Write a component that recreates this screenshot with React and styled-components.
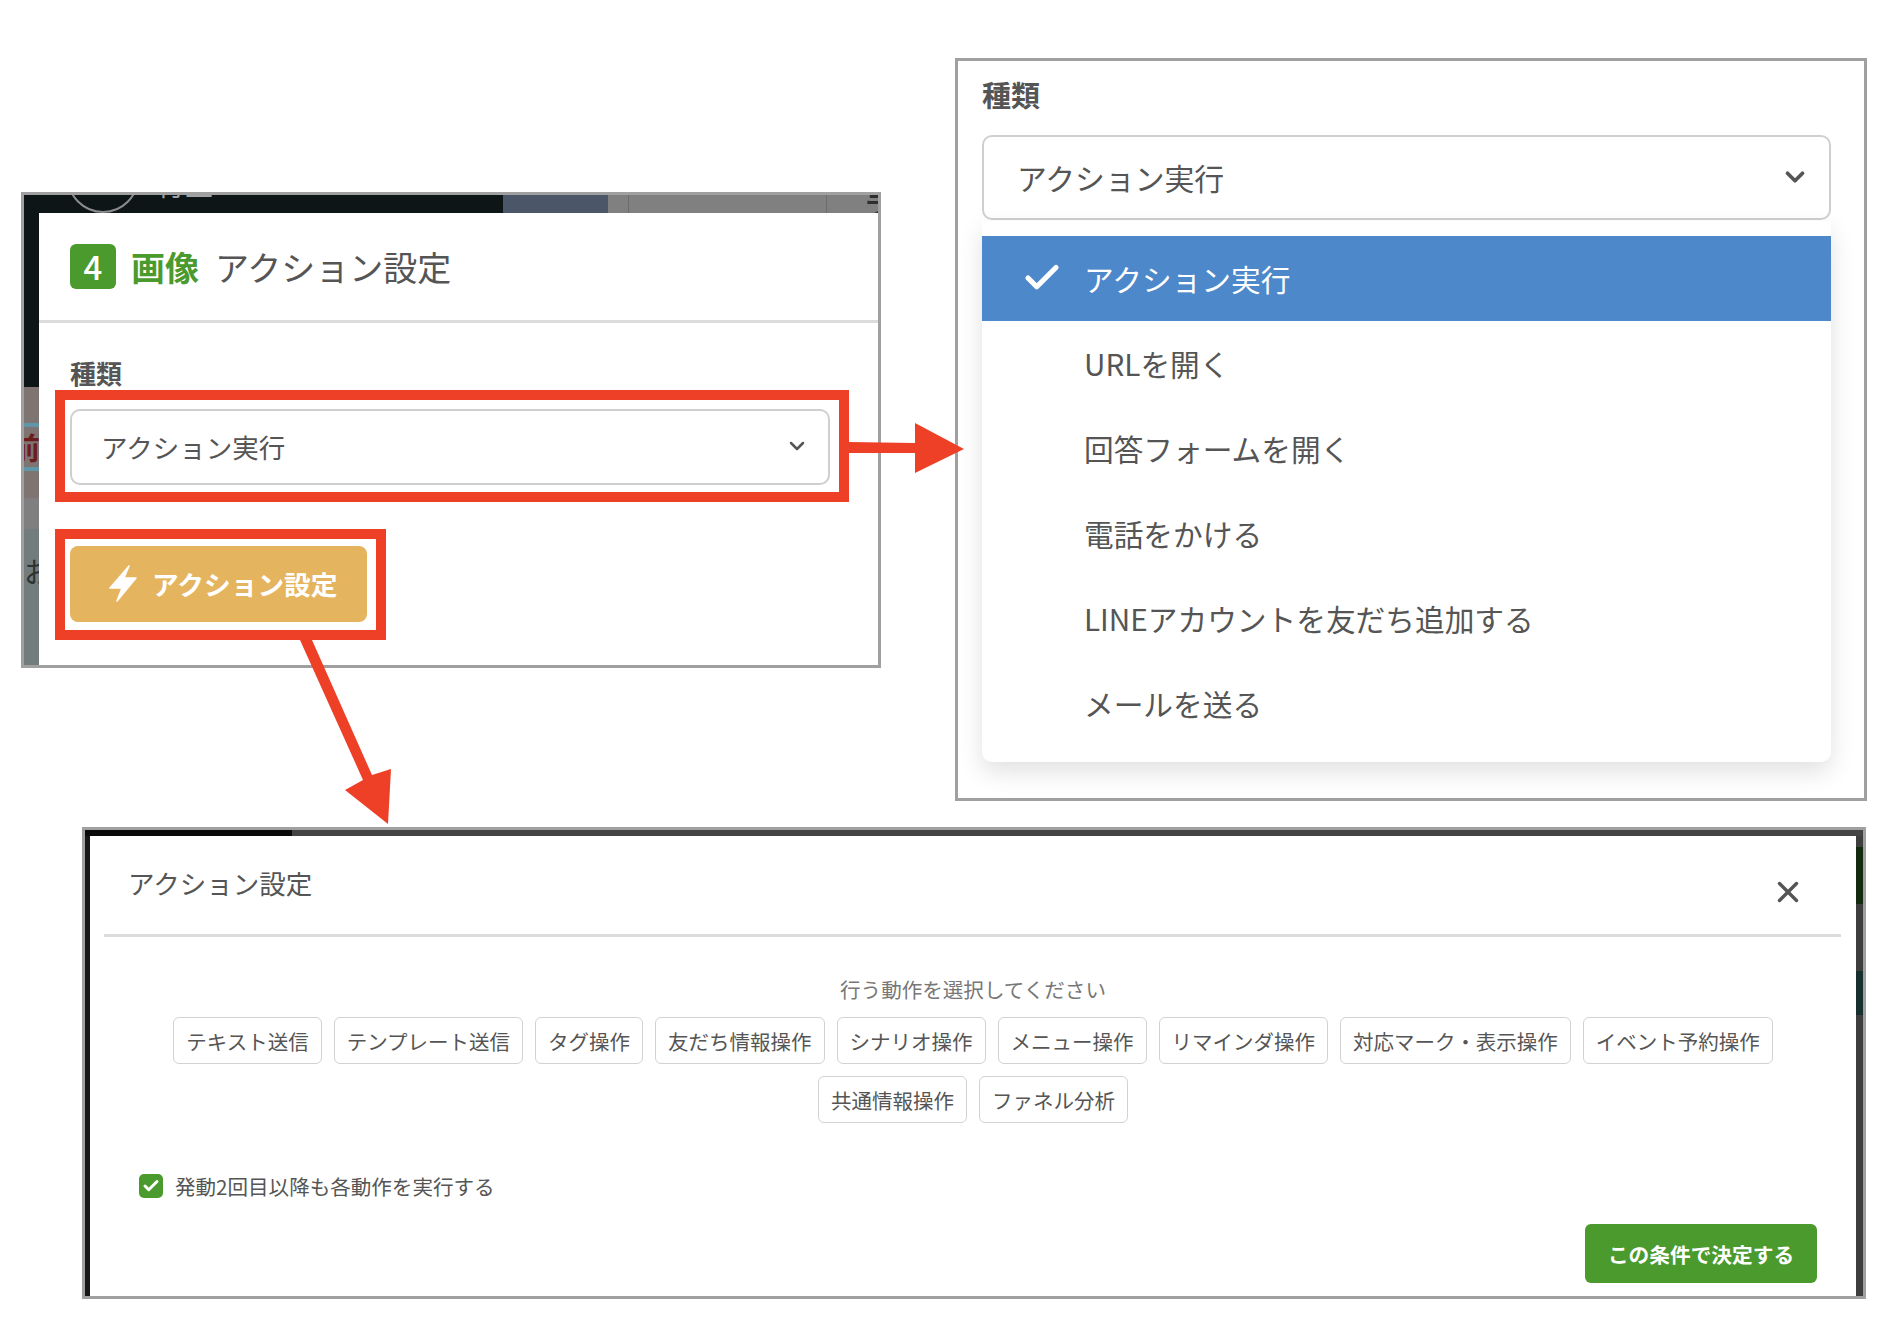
import React from "react";
import styled, { createGlobalStyle } from "styled-components";
import { ChevronDown, Check, X } from "lucide-react";

const RED = "#ee4026";
const GREEN = "#4a9a2e";
const TEXT = "#555";

const Global = createGlobalStyle`
  * { box-sizing: border-box; }
  html, body { margin: 0; padding: 0; background: #fff; }
  body { font-family: "Noto Sans CJK JP", "Noto Sans", sans-serif; color: ${TEXT}; }
`;

const Page = styled.div`
  position: relative;
  width: 1880px;
  height: 1320px;
  padding-top: 59px;
  overflow: hidden;
`;
const TopRow = styled.div`
  display: flex;
  align-items: flex-start;
  padding-left: 21px;
`;
const Arrows = styled.svg`
  position: absolute;
  inset: 0;
  pointer-events: none;
`;

/* shared screenshot frame */
const Shot = styled.section`
  border: 3px solid #a0a0a0;
  display: grid;
  overflow: hidden;
`;

/* left: modal with the two highlighted controls */
const ModalShot = styled(Shot)`
  width: 860px;
  height: 476px;
  margin-top: 133px;
  grid-template-columns: 15px 1fr;
  grid-template-rows: 18px 1fr;
  background: #fff;
`;
const TopStrip = styled.div`
  grid-column: 1 / -1;
  position: relative;
  display: flex;
  overflow: hidden;
`;
const StripPart = styled.div`
  flex: ${(p) => (p.$w ? `0 0 ${p.$w}px` : "1")};
  background: ${(p) => p.$c};
  border-left: ${(p) => (p.$line ? "1px solid #6c6c6c" : "none")};
`;
const Avatar = styled.div`
  position: absolute;
  left: 43px;
  top: -54px;
  width: 72px;
  height: 72px;
  border-radius: 50%;
  border: 2px solid #8c8c8c;
`;
const GhostName = styled.span`
  position: absolute;
  left: 133px;
  top: -28px;
  font-size: 28px;
  line-height: 34px;
  color: #a2a2a2;
`;
const GhostCorner = styled.span`
  position: absolute;
  right: -12px;
  top: -6px;
  font-size: 26px;
  line-height: 30px;
  font-weight: 700;
  color: #2e2e2e;
`;
const SideStrip = styled.div`
  display: flex;
  flex-direction: column;
  overflow: hidden;
`;
const SidePart = styled.div`
  position: relative;
  flex: ${(p) => (p.$h ? `0 0 ${p.$h}px` : "1")};
  background: ${(p) => p.$c};
  overflow: hidden;
`;
const TealBars = styled.div`
  position: absolute;
  left: 0;
  right: 0;
  top: 36px;
  height: 48px;
  border-top: 4px solid #5f97a8;
  border-bottom: 4px solid #5f97a8;
`;
const GhostRed = styled.span`
  position: absolute;
  right: -1px;
  top: 41px;
  font-size: 30px;
  line-height: 36px;
  font-weight: 700;
  color: #6d1c1c;
`;
const GhostDark = styled.span`
  position: absolute;
  left: 0;
  top: 24px;
  font-size: 28px;
  line-height: 36px;
  color: #2e3232;
`;
const ModalCard = styled.div`
  background: #fff;
  border-top-left-radius: 10px;
`;
const ModalHeader = styled.header`
  height: 107px;
  padding: 31px 0 0 31px;
  display: flex;
  align-items: flex-start;
`;
const Badge = styled.span`
  flex: 0 0 46px;
  height: 45px;
  border-radius: 6px;
  background: ${GREEN};
  color: #fff;
  font-size: 33px;
  font-weight: 500;
  line-height: 45px;
  text-align: center;
`;
const KindName = styled.span`
  margin-left: 15px;
  font-size: 34px;
  line-height: 45px;
  font-weight: 700;
  color: ${GREEN};
`;
const ModalTitle = styled.h2`
  margin: 0 0 0 16px;
  font-size: 34px;
  line-height: 45px;
  font-weight: 400;
  color: ${TEXT};
`;
const Rule = styled.hr`
  margin: 0;
  border: 0;
  height: 3px;
  background: #dcdcdc;
`;
const ModalBody = styled.div`
  padding: 33px 0 0 16px;
`;
const FieldLabel = styled.label`
  display: block;
  margin-left: 15px;
  font-size: 26px;
  line-height: 34px;
  font-weight: 700;
  color: ${TEXT};
`;
const Highlight = styled.div`
  width: ${(p) => p.$w}px;
  height: ${(p) => p.$h}px;
  margin-top: ${(p) => p.$mt}px;
  padding: ${(p) => p.$pad};
  border: 10px solid ${RED};
`;
const SelectBox = styled.div`
  height: ${(p) => p.$h}px;
  padding: 0 ${(p) => p.$pr}px 2px ${(p) => p.$pl}px;
  display: flex;
  align-items: center;
  justify-content: space-between;
  border: 2px solid #cfcfcf;
  border-radius: 10px;
  background: #fff;
  font-size: ${(p) => p.$size}px;
  color: ${TEXT};
`;
const ActionButton = styled.button`
  width: 297px;
  height: 76px;
  padding: 0 0 2px 39px;
  display: flex;
  align-items: center;
  gap: 15px;
  border: 0;
  border-radius: 8px;
  background: #e5b45f;
  color: #fff;
  font: 700 26.7px "Noto Sans CJK JP", sans-serif;
`;

/* right: open dropdown */
const DropdownShot = styled.section`
  width: 912px;
  height: 743px;
  margin: -1px 0 0 74px;
  padding: 12px 33px 0 24px;
  border: 3px solid #a0a0a0;
`;
const DropLabel = styled.label`
  display: block;
  height: 62px;
  font-size: 29px;
  line-height: 42px;
  font-weight: 700;
  color: ${TEXT};
`;
const Menu = styled.ul`
  list-style: none;
  margin: 1px 0 0;
  padding: 15px 0 16px;
  background: #fff;
  border-radius: 0 0 10px 10px;
  box-shadow: 0 10px 24px rgba(0, 0, 0, 0.12);
`;
const MenuItem = styled.li`
  height: 85px;
  padding-bottom: 1px;
  display: flex;
  align-items: center;
  background: ${(p) => (p.$active ? "#4d88ca" : "transparent")};
  color: ${(p) => (p.$active ? "#fff" : TEXT)};
  font-size: 29.7px;
`;
const CheckSlot = styled.span`
  flex: 0 0 102px;
  padding-left: 39px;
  display: flex;
  align-items: center;
`;

/* bottom: action settings modal */
const SettingsShot = styled(Shot)`
  width: 1784px;
  height: 472px;
  margin: 26px 0 0 82px;
  grid-template-columns: 5px 1fr 7px;
  grid-template-rows: 6px 1fr;
`;
const SettingsCard = styled.div`
  background: #fff;
  border-radius: 6px 6px 0 0;
  display: flex;
  flex-direction: column;
`;
const SettingsHeader = styled.header`
  height: 98px;
  padding: 19px 51px 0 38px;
  display: flex;
  justify-content: space-between;
  align-items: flex-start;
`;
const SettingsTitle = styled.h3`
  margin: 0;
  font-size: 26.5px;
  line-height: 56px;
  font-weight: 400;
  color: ${TEXT};
`;
const CloseButton = styled.button`
  margin-top: 20px;
  padding: 0;
  border: 0;
  background: none;
  color: #555;
  display: flex;
`;
const SettingsRule = styled(Rule)`
  margin: 0 15px 0 14px;
`;
const Hint = styled.p`
  margin: 38px 0 0;
  height: 42px;
  font-size: 20.55px;
  line-height: 28px;
  text-align: center;
  color: #777;
`;
const ChipWrap = styled.div`
  width: 1660px;
  margin: 0 auto;
  display: flex;
  flex-wrap: wrap;
  justify-content: center;
  gap: 12px;
`;
const Chip = styled.button`
  height: 47px;
  padding: 0 12px;
  border: 1px solid #d2d2d2;
  border-radius: 6px;
  background: #fff;
  color: ${TEXT};
  font: 400 20.5px "Noto Sans CJK JP", sans-serif;
`;
const RepeatRow = styled.label`
  margin: 51px 0 0 49px;
  display: flex;
  align-items: center;
  gap: 12px;
  font-size: 20.55px;
  line-height: 24px;
  color: ${TEXT};
`;
const CheckBox = styled.span`
  width: 24px;
  height: 24px;
  border-radius: 5px;
  background: ${GREEN};
  display: flex;
  align-items: center;
  justify-content: center;
`;
const Footer = styled.footer`
  margin-top: 26px;
  padding-right: 39px;
  display: flex;
  justify-content: flex-end;
`;
const ConfirmButton = styled.button`
  width: 232px;
  height: 59px;
  border: 0;
  border-radius: 6px;
  background: ${GREEN};
  color: #fff;
  font: 700 20.7px "Noto Sans CJK JP", sans-serif;
`;

const chips = [
  "テキスト送信",
  "テンプレート送信",
  "タグ操作",
  "友だち情報操作",
  "シナリオ操作",
  "メニュー操作",
  "リマインダ操作",
  "対応マーク・表示操作",
  "イベント予約操作",
  "共通情報操作",
  "ファネル分析",
];
const options = [
  "アクション実行",
  "URLを開く",
  "回答フォームを開く",
  "電話をかける",
  "LINEアカウントを友だち追加する",
  "メールを送る",
];

const Bolt = () => (
  <svg width="28" height="37" viewBox="0 0 28 37" fill="#fff" stroke="#fff" strokeWidth="1.5" strokeLinejoin="round">
    <path d="M20 1 1 23h12L8 36 27 13H15z" />
  </svg>
);

export default function App() {
  return (
    <Page>
      <Global />
      <TopRow>
        <ModalShot>
          <TopStrip>
            <StripPart $w={479} $c="#0d1516" />
            <StripPart $w={105} $c="#4b5668" />
            <StripPart $w={20} $c="#808080" />
            <StripPart $w={198} $c="#808080" $line />
            <StripPart $c="#808080" $line />
            <Avatar />
            <GhostName>行里</GhostName>
            <GhostCorner>ラ</GhostCorner>
          </TopStrip>
          <SideStrip>
            <SidePart $h={174} $c="#0d1516" />
            <SidePart $h={111} $c="#7e7472">
              <TealBars />
              <GhostRed>前</GhostRed>
            </SidePart>
            <SidePart $h={31} $c="#7f7f7f" />
            <SidePart $c="#737c7c">
              <GhostDark>お</GhostDark>
            </SidePart>
          </SideStrip>
          <ModalCard>
            <ModalHeader>
              <Badge>4</Badge>
              <KindName>画像</KindName>
              <ModalTitle>アクション設定</ModalTitle>
            </ModalHeader>
            <Rule />
            <ModalBody>
              <FieldLabel>種類</FieldLabel>
              <Highlight $w={794} $h={112} $mt={0} $pad="9px 9px 7px 5px">
                <SelectBox $h={76} $pl={29} $pr={19} $size={26.5}>
                  アクション実行
                  <ChevronDown size={24} strokeWidth={2.5} />
                </SelectBox>
              </Highlight>
              <Highlight $w={331} $h={111} $mt={27} $pad="7px 9px 8px 5px">
                <ActionButton>
                  <Bolt />
                  アクション設定
                </ActionButton>
              </Highlight>
            </ModalBody>
          </ModalCard>
        </ModalShot>

        <DropdownShot>
          <DropLabel>種類</DropLabel>
          <SelectBox $h={85} $pl={33} $pr={19} $size={29.8}>
            アクション実行
            <ChevronDown size={30} strokeWidth={3} />
          </SelectBox>
          <Menu>
            {options.map((o, i) => (
              <MenuItem key={o} $active={i === 0}>
                <CheckSlot>{i === 0 && <Check size={42} strokeWidth={3} />}</CheckSlot>
                {o}
              </MenuItem>
            ))}
          </Menu>
        </DropdownShot>
      </TopRow>

      <SettingsShot>
        <TopStrip>
          <StripPart $w={207} $c="#0a0a0a" />
          <StripPart $c="#444" />
        </TopStrip>
        <SideStrip>
          <SidePart $c="#161616" />
        </SideStrip>
        <SettingsCard>
          <SettingsHeader>
            <SettingsTitle>アクション設定</SettingsTitle>
            <CloseButton aria-label="閉じる">
              <X size={34} strokeWidth={2.4} />
            </CloseButton>
          </SettingsHeader>
          <SettingsRule />
          <Hint>行う動作を選択してください</Hint>
          <ChipWrap>
            {chips.map((c) => (
              <Chip key={c}>{c}</Chip>
            ))}
          </ChipWrap>
          <RepeatRow>
            <CheckBox>
              <Check size={18} strokeWidth={4} color="#fff" />
            </CheckBox>
            発動2回目以降も各動作を実行する
          </RepeatRow>
          <Footer>
            <ConfirmButton>この条件で決定する</ConfirmButton>
          </Footer>
        </SettingsCard>
        <SideStrip>
          <SidePart $h={11} $c="#3e3e3e" />
          <SidePart $h={57} $c="#142a10" />
          <SidePart $h={67} $c="#3e3e3e" />
          <SidePart $h={44} $c="#17302f" />
          <SidePart $c="#3e3e3e" />
        </SideStrip>
      </SettingsShot>

      <Arrows width="1880" height="1320" viewBox="0 0 1880 1320">
        <path d="M849 442 L915 443 L915 423 L964 449 L915 473 L915 453 L849 453 Z" fill={RED} />
        <path d="M300 640 L312 640 L372 775 L391 769 L388 824 L345 790 L363 780 Z" fill={RED} />
      </Arrows>
    </Page>
  );
}
